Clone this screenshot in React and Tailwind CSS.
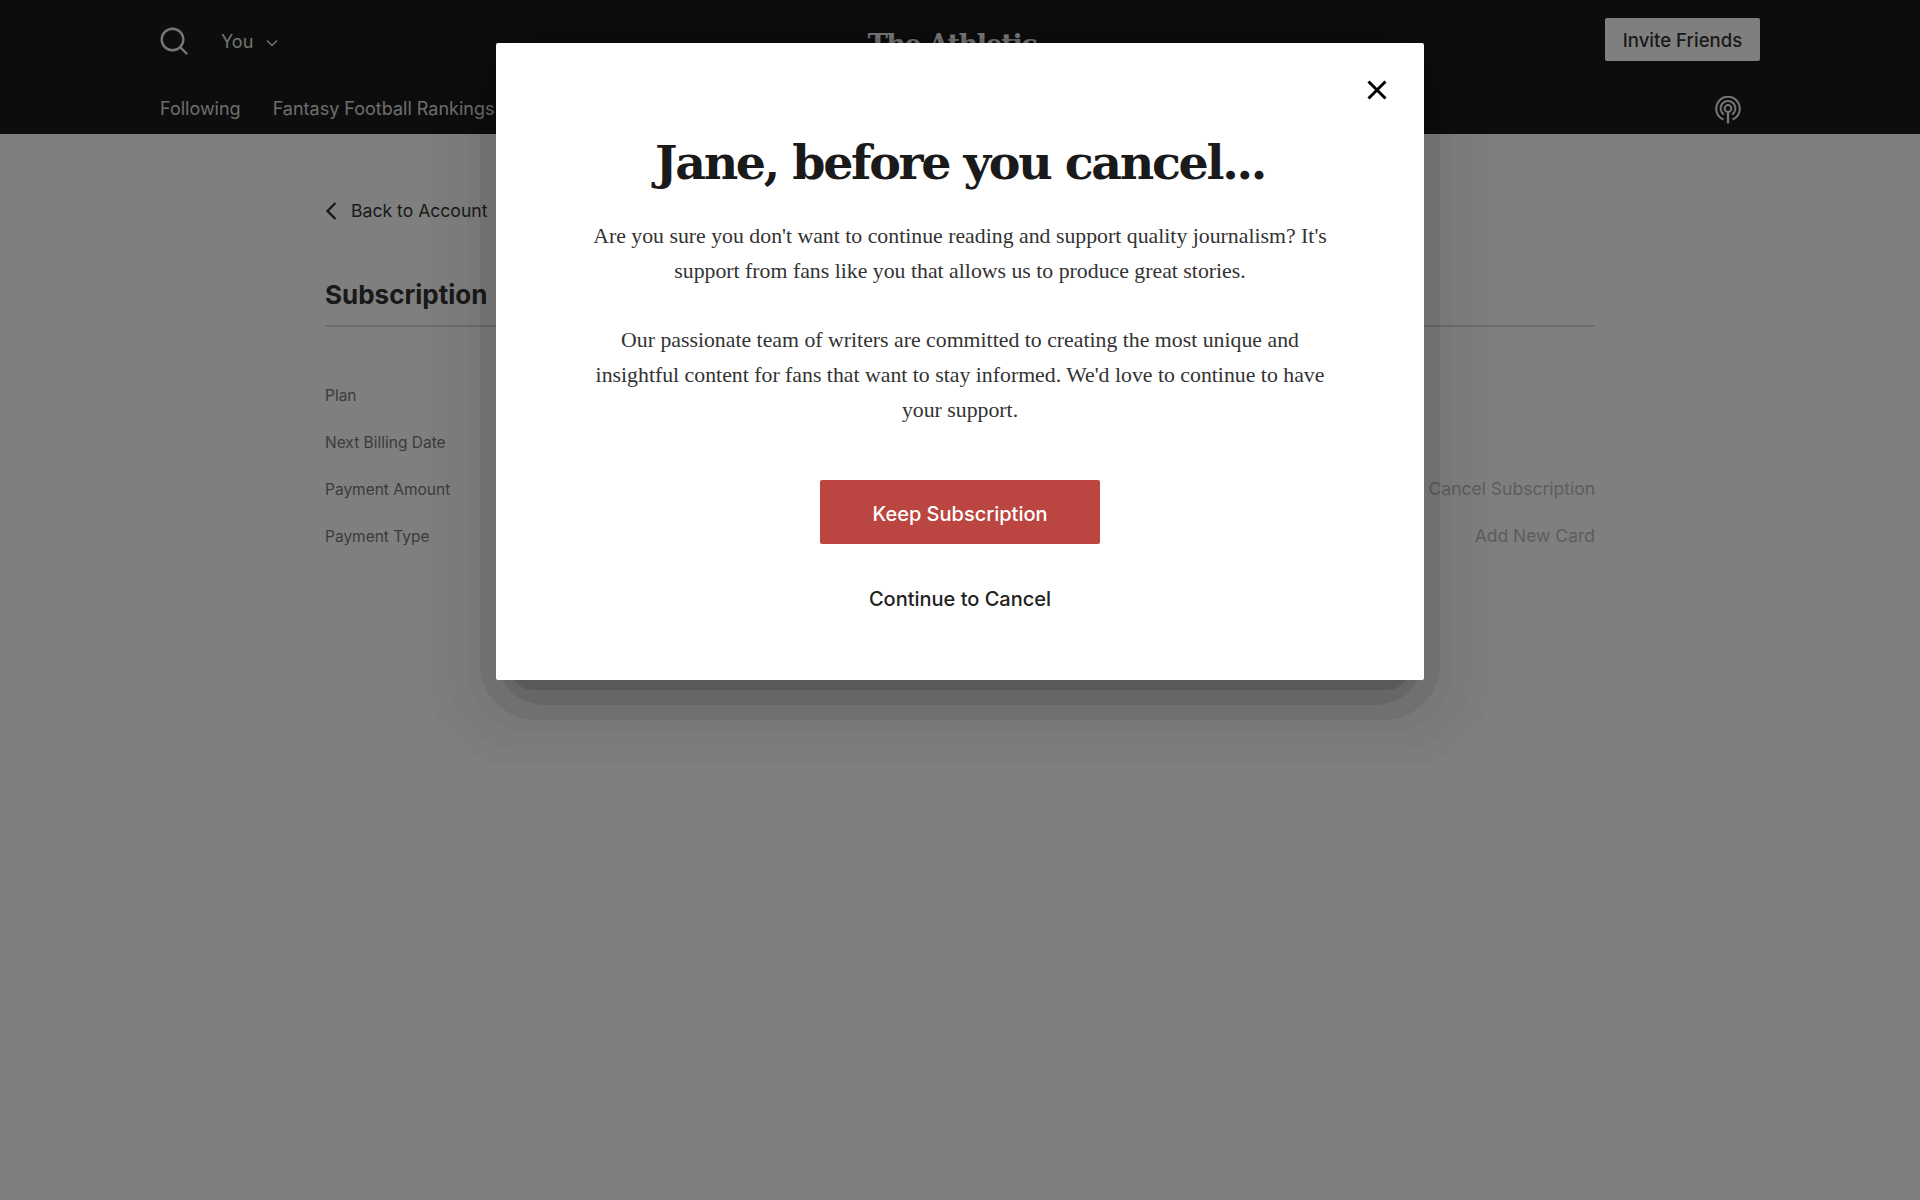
import React from 'react';

const sans = "font-['Inter','Liberation_Sans',sans-serif]";
const serif = "font-['Liberation_Serif','DejaVu_Serif',serif]";

const SearchIcon = () => (
  <svg width="28" height="28" viewBox="0 0 28 28" fill="none" stroke="#ededed" strokeWidth="2.4" strokeLinecap="round">
    <circle cx="12.5" cy="12.5" r="10.8" />
    <path d="M20.5 20.5 L26.5 26.5" />
  </svg>
);

const PodcastIcon = () => (
  <svg width="26" height="28" viewBox="0 0 26 28" fill="none" stroke="#ededed" strokeWidth="2">
    <path d="M8.5 23.5 A11.8 11.8 0 1 1 17.5 23.5" />
    <path d="M9 18.6 A7.4 7.4 0 1 1 17 18.6" />
    <circle cx="13" cy="12.5" r="3.4" />
    <path d="M13 16 V27.5" strokeWidth="2.4" />
  </svg>
);

const rows = [
  { label: 'Plan', action: '' },
  { label: 'Next Billing Date', action: '' },
  { label: 'Payment Amount', action: 'Cancel Subscription' },
  { label: 'Payment Type', action: 'Add New Card' },
];

// the stepped shadow seen around the dialog
const shadowBands = [
  'inset-x-[-66px] top-[-20px] bottom-[-85px] rounded-[80px] bg-black/[0.015]',
  'inset-x-[-48px] top-[-18px] bottom-[-70px] rounded-[70px] bg-black/[0.02]',
  'inset-x-[-29px] top-[-15px] bottom-[-53px] rounded-[64px] bg-black/[0.03]',
  'inset-x-[-16px] top-[-10px] bottom-[-40px] rounded-[56px] bg-black/[0.07]',
  'inset-x-[0px] top-[-5px] bottom-[-25px] rounded-[48px] bg-black/[0.09]',
  'inset-x-[16px] top-[5px] bottom-[-10px] rounded-[20px] bg-black/[0.12]',
];

const App = () => {
  return (
    <div className={`relative min-h-[1200px] bg-white ${sans}`}>
      <header className="h-[134px] bg-[#1a1a1a] px-[160px] flex flex-col">
        <div className="flex justify-between items-start">
          <div className="w-[139px] flex items-center pt-[27px]">
            <SearchIcon />
            <span className="ml-[33px] text-[18px] text-[#e4e4e4]">You</span>
            <svg className="ml-[13px] mt-[3px]" width="12" height="8" viewBox="0 0 12 8" fill="none" stroke="#e4e4e4" strokeWidth="1.5">
              <path d="M1 1.5 L6 6.5 L11 1.5" />
            </svg>
          </div>
          <div className="pt-[25px] font-['DejaVu_Serif',serif] font-bold text-[27px] leading-[40px] tracking-[-1.4px] text-white">The Athletic</div>
          <button className="mt-[18px] pt-[2px] w-[155px] h-[43px] rounded-[2px] bg-white text-[#333] text-[18.6px] font-medium">Invite Friends</button>
        </div>
        <div className="flex items-start justify-between mt-[30px]">
          <nav className="flex gap-[32px] text-[18px] text-[#dcdcdc]">
            <span>Following</span>
            <span>Fantasy Football Rankings</span>
          </nav>
          <div className="mr-[19px] mt-[1px]"><PodcastIcon /></div>
        </div>
      </header>

      <main className="w-[1270px] mx-auto pt-[65px]">
        <div className="flex items-center text-[17.6px] text-[#333] leading-[24px]">
          <svg width="12" height="18" viewBox="0 0 12 18" fill="none" stroke="#333" strokeWidth="2.4">
            <path d="M10.5 1 L2.5 9 L10.5 17" />
          </svg>
          <span className="ml-[14px]">Back to Account</span>
        </div>
        <h2 className="mt-[55px] pb-[13px] border-b-2 border-[#d8d8d8] text-[26px] leading-[34px] font-bold text-[#333]">Subscription</h2>
        <div className="mt-[57px] flex flex-col gap-[23px]">
          {rows.map(row => (
            <div key={row.label} className="flex items-center justify-between h-[24px]">
              <span className="text-[15.5px] text-[#777]">{row.label}</span>
              <span className="mb-[2px] text-[17.5px] text-[#bbb]">{row.action}</span>
            </div>
          ))}
        </div>
      </main>

      <div className="fixed inset-0 bg-black/50 flex justify-center items-start pt-[43px]">
        <div className="relative w-[928px]">
          {shadowBands.map(band => (
            <div key={band} className={`absolute ${band}`}></div>
          ))}
          <div className="relative h-[637px] bg-white rounded-[2px] flex flex-col items-center pt-[87px]">
            <button className="absolute top-[37px] right-[37px]">
              <svg className="block" width="20" height="20" viewBox="0 0 20 20" fill="none" stroke="#000" strokeWidth="3">
                <path d="M1.5 1.5 L18.5 18.5 M18.5 1.5 L1.5 18.5" />
              </svg>
            </button>
            <h1 className="font-['DejaVu_Serif',serif] font-bold text-[47.5px] leading-[64px] tracking-[-2.3px] text-[#1a1a1a]">Jane, before you cancel...</h1>
            <div className={`mt-[25px] w-[745px] text-center ${serif} text-[21.8px] leading-[35px] text-[#333]`}>
              <p>Are you sure you don't want to continue reading and support quality journalism? It's support from fans like you that allows us to produce great stories.</p>
              <p className="mt-[34px]">Our passionate team of writers are committed to creating the most unique and insightful content for fans that want to stay informed. We'd love to continue to have your support.</p>
            </div>
            <button className="mt-[52px] pt-[3px] w-[280px] h-[64px] rounded-[2px] bg-[#bb4540] text-white text-[20px] font-medium">Keep Subscription</button>
            <button className="mt-[41px] text-[20px] leading-[28px] font-medium text-[#222]">Continue to Cancel</button>
          </div>
        </div>
      </div>
    </div>
  );
};

export default App;
